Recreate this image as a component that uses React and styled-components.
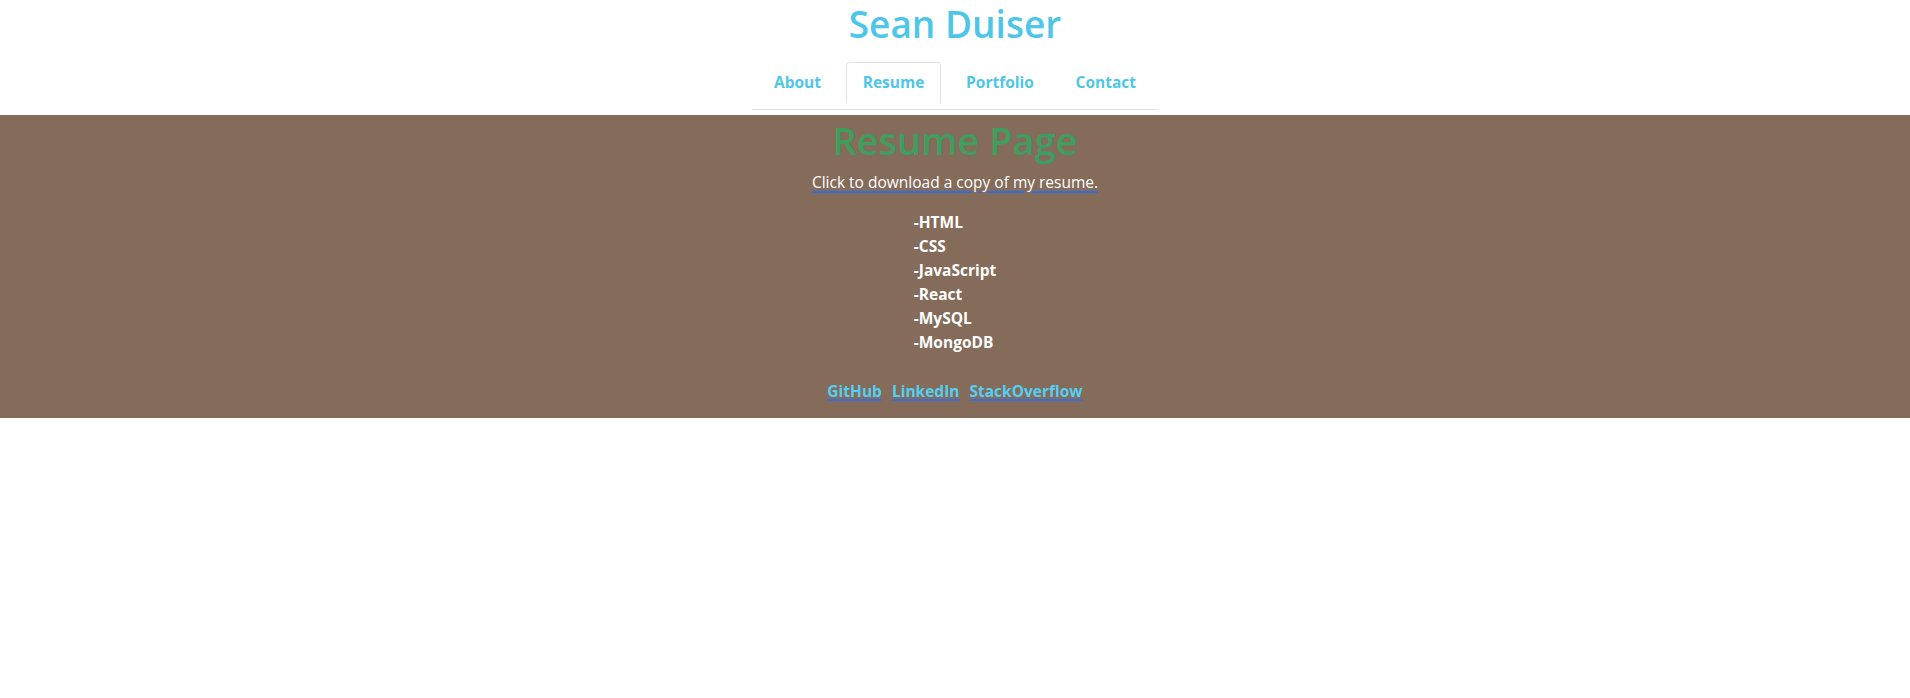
import React from "react";
import styled, { createGlobalStyle } from "styled-components";

const GlobalStyle = createGlobalStyle`
  body {
    margin: 0;
    background: #ffffff;
    font-family: "Open Sans", "Noto Sans", sans-serif;
  }
`;

const tabs = ["About", "Resume", "Portfolio", "Contact"];
const skills = ["HTML", "CSS", "JavaScript", "React", "MySQL", "MongoDB"];
const links = ["GitHub", "LinkedIn", "StackOverflow"];

const App = () => {
  return (
    <>
      <GlobalStyle />
      <Header>
        <Name>Sean Duiser</Name>
        <Tabs>
          {tabs.map((t) => (
            <Tab key={t} $active={t === "Resume"}>
              <TabLink href="#">{t}</TabLink>
            </Tab>
          ))}
        </Tabs>
      </Header>
      <Section>
        <PageTitle>Resume Page</PageTitle>
        <Download href="#">Click to download a copy of my resume.</Download>
        <SkillList>
          {skills.map((s) => (
            <Skill key={s}>-{s}</Skill>
          ))}
        </SkillList>
        <Links>
          {links.map((l) => (
            <SocialLink key={l} href="#">
              {l}
            </SocialLink>
          ))}
        </Links>
      </Section>
    </>
  );
};

export default App;

const Header = styled.header`
  display: flex;
  flex-direction: column;
  align-items: center;
  padding-top: 1px;
`;

const Name = styled.h1`
  margin: 0;
  font-size: 37px;
  font-weight: 600;
  line-height: 45px;
  color: #4dc6e8;
`;

const Tabs = styled.ul`
  display: flex;
  justify-content: space-between;
  list-style: none;
  margin: 16px 0 5px;
  padding: 0 5px 6px;
  width: 396px;
  border-bottom: 1px solid #dee2e6;
`;

const Tab = styled.li`
  border: 1px solid ${(p) => (p.$active ? "#dee2e6" : "transparent")};
  border-bottom: none;
  border-radius: 4px 4px 0 0;
`;

const TabLink = styled.a`
  display: block;
  padding: 8px 16px 9px;
  font-size: 15.5px;
  font-weight: 700;
  line-height: 23px;
  color: #4dc6e8;
  text-decoration: none;
`;

const Section = styled.section`
  display: flex;
  flex-direction: column;
  align-items: center;
  background: #846b5a;
  padding: 0 0 15px;
`;

const PageTitle = styled.h2`
  margin: 0;
  font-size: 38px;
  font-weight: 600;
  line-height: 50px;
  color: #3f9d5f;
`;

const Download = styled.a`
  margin-top: 5px;
  font-size: 15.5px;
  line-height: 24px;
  color: #ffffff;
  text-decoration: underline;
  text-decoration-color: #2f6fe0;
  text-decoration-thickness: 2px;
  text-underline-offset: 3px;
`;

const SkillList = styled.ul`
  list-style: none;
  margin: 16px 0 0;
  padding: 0;
  display: flex;
  flex-direction: column;
  align-items: flex-start;
`;

const Skill = styled.li`
  font-size: 15.5px;
  font-weight: 700;
  line-height: 24px;
  color: #ffffff;
`;

const Links = styled.div`
  display: flex;
  gap: 10px;
  margin-top: 25px;
`;

const SocialLink = styled.a`
  font-size: 15.5px;
  font-weight: 700;
  line-height: 24px;
  color: #52d0f5;
  text-decoration: underline;
  text-decoration-color: #3b6fd8;
  text-decoration-thickness: 2px;
  text-underline-offset: 2px;
`;
